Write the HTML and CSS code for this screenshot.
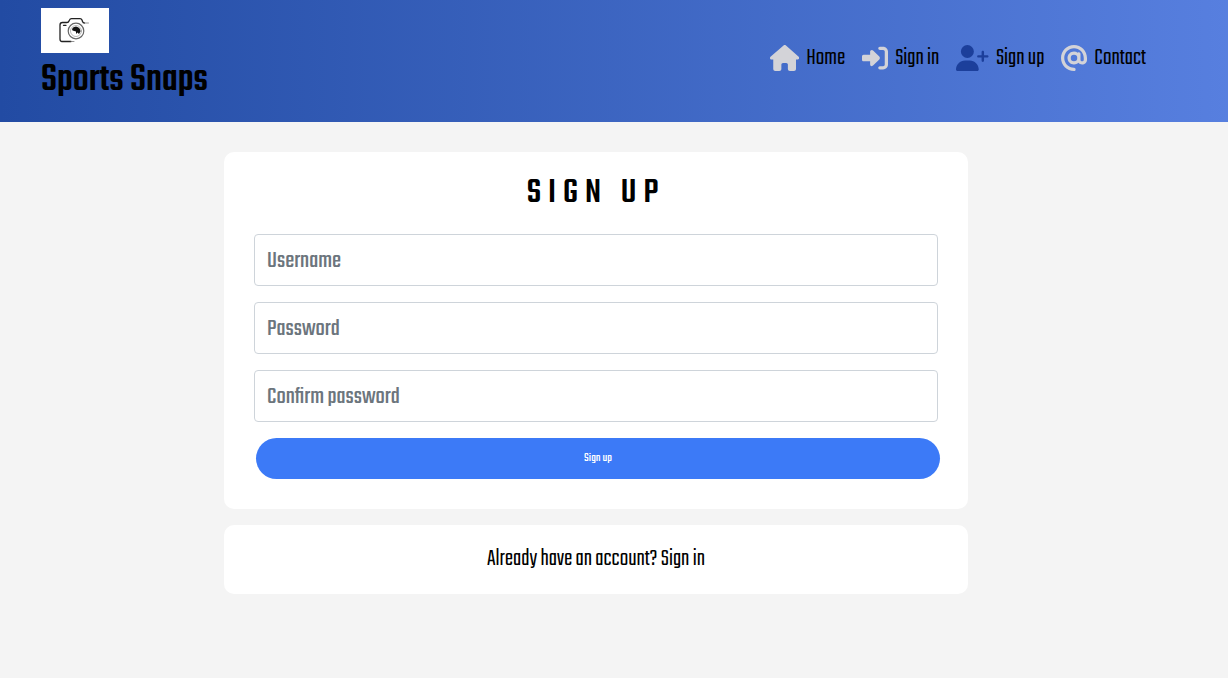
FILE: index.html
```html
<!DOCTYPE html>
<html lang="en">
<head>
<meta charset="utf-8">
<meta name="viewport" content="width=device-width, initial-scale=1">
<title>Sports Snaps</title>
<link rel="stylesheet" href="styles.css">
</head>
<body>
<header class="header">
  <a class="brand" href="#">
    <svg class="brand-logo" viewBox="0 0 68 45" role="img" aria-label="Camera">
      <rect width="68" height="45" fill="#fff"/>
      <g fill="none" stroke="#222" stroke-linecap="round" stroke-linejoin="round">
        <path stroke-width="1.3" d="M30 33.500H21Q19 33.500 19 31V17Q19 14.500 21.500 14.500H26Q27.500 14.500 28 13L28.500 12Q29 10.700 30.500 10.700H39Q40.500 10.700 41 12L41.500 13.500Q42 15 43.500 15"/>
        <path stroke-width=".8" stroke="#777" d="M30 33.500h3M43.500 15h4"/>
        <circle cx="35" cy="23" r="7.800" stroke="#666" stroke-width="1.2"/>
        <circle cx="35" cy="23" r="5.500" stroke="#999" stroke-width=".7"/>
        <path stroke-width="1.300" d="M22.500 17.300h2.500"/>
      </g>
      <path fill="#111" d="M31 21Q32 18.500 35 18.500Q39.500 19.500 39.500 23.500L38 26L36.500 24.500L35 26V23.500L31.500 22.500Z"/>
    </svg>
    <span class="brand-name">Sports Snaps</span>
  </a>
  <nav class="nav">
    <a class="nav-link" href="#">
      <svg class="icon" viewBox="0 0 576 512" aria-hidden="true"><path d="M575.8 255.5c0 18-15 32.100-32 32.100h-32l.7 160.200c0 2.700-.2 5.400-.5 8.100V472c0 22.100-17.900 40-40 40H456c-1.100 0-2.200 0-3.300-.1c-1.400 .1-2.800 .1-4.200 .1H392c-22.100 0-40-17.900-40-40V384c0-17.700-14.300-32-32-32H256c-17.700 0-32 14.300-32 32v88c0 22.100-17.900 40-40 40H128.100c-1.500 0-3-.1-4.500-.2c-1.200 .1-2.400 .2-3.600 .2H104c-22.100 0-40-17.900-40-40V360c0-.9 0-1.900 .1-2.800V287.600H32c-18 0-32-14-32-32.100c0-9 3-17 10-24L266.400 8c7-7 15-8 22-8s15 2 21 7L564.800 231.500c8 7 12 15 11 24z"/></svg>
      <span>Home</span>
    </a>
    <a class="nav-link" href="#">
      <svg class="icon" viewBox="0 0 512 512" aria-hidden="true"><path d="M217.900 105.900L340.700 228.700c7.200 7.200 11.300 17.100 11.300 27.300s-4.100 20.100-11.300 27.300L217.900 406.100c-6.400 6.400-15 9.900-24 9.900c-18.700 0-33.900-15.200-33.900-33.900V320H32c-17.700 0-32-14.300-32-32v-64c0-17.700 14.300-32 32-32h128v-62.100c0-18.700 15.200-33.900 33.900-33.900c9 0 17.600 3.600 24 9.900zM352 416h64c17.700 0 32-14.300 32-32V128c0-17.700-14.300-32-32-32h-64c-17.700 0-32-14.300-32-32s14.300-32 32-32h64c53 0 96 43 96 96v256c0 53-43 96-96 96h-64c-17.700 0-32-14.300-32-32s14.300-32 32-32z"/></svg>
      <span>Sign in</span>
    </a>
    <a class="nav-link nav-link-active" href="#" aria-current="page">
      <svg class="icon" viewBox="0 0 640 512" aria-hidden="true"><path d="M96 128a128 128 0 1 1 256 0A128 128 0 1 1 96 128zM0 482.300C0 383.800 79.800 304 178.300 304h91.400C368.200 304 448 383.800 448 482.300c0 16.400-13.300 29.700-29.700 29.700H29.700C13.300 512 0 498.700 0 482.300zM504 312V248H440c-13.300 0-24-10.700-24-24s10.700-24 24-24h64V136c0-13.300 10.700-24 24-24s24 10.700 24 24v64h64c13.300 0 24 10.700 24 24s-10.700 24-24 24H552v64c0 13.300-10.700 24-24 24s-24-10.700-24-24z"/></svg>
      <span>Sign up</span>
    </a>
    <a class="nav-link" href="#">
      <svg class="icon" viewBox="0 0 512 512" aria-hidden="true"><path d="M256 64C150 64 64 150 64 256s86 192 192 192c17.700 0 32 14.300 32 32s-14.300 32-32 32C114.600 512 0 397.400 0 256S114.600 0 256 0S512 114.600 512 256v32c0 53-43 96-96 96c-29.300 0-55.600-13.200-73.200-33.900C320 371.100 289.500 384 256 384c-70.700 0-128-57.300-128-128s57.300-128 128-128c27.900 0 53.700 8.900 74.700 24.100c5.700-5 13.100-8.100 21.300-8.100c17.700 0 32 14.300 32 32v112c0 17.700 14.300 32 32 32s32-14.300 32-32V256c0-106-86-192-192-192zm64 192a64 64 0 1 0 -128 0 64 64 0 1 0 128 0z"/></svg>
      <span>Contact</span>
    </a>
  </nav>
</header>
<main class="main">
  <section class="card">
    <h1 class="card-title">Sign up</h1>
    <form class="form">
      <input class="field" type="text" placeholder="Username" aria-label="Username">
      <input class="field" type="password" placeholder="Password" aria-label="Password">
      <input class="field" type="password" placeholder="Confirm password" aria-label="Confirm password">
      <button class="submit" type="submit">Sign up</button>
    </form>
  </section>
  <section class="card card-note">
    <a class="note-link" href="#">Already have an account? <span>Sign in</span></a>
  </section>
</main>
</body>
</html>
```
FILE: styles.css
```css
* {
  box-sizing: border-box;
}

body {
  margin: 0;
  background: #f4f4f4;
  color: #000;
  font-family: Teko, "Liberation Sans Narrow", "Liberation Sans", sans-serif;
}

a {
  color: inherit;
  text-decoration: none;
}

.header {
  display: flex;
  justify-content: space-between;
  align-items: flex-start;
  padding: 8px 82px 13px 41px;
  background: linear-gradient(90deg, #224ba3, #577fdf);
}

.brand {
  display: flex;
  flex-direction: column;
}

.brand-logo {
  width: 68px;
  height: 45px;
}

.brand-name {
  font-size: 40px;
  font-weight: 500;
  line-height: 56px;
}

.nav {
  display: flex;
  gap: 17px;
  padding-top: 36px;
}

.nav-link {
  display: flex;
  align-items: center;
  gap: 7px;
  font-size: 25px;
  font-weight: 300;
  line-height: 28px;
}

.icon {
  height: 26px;
  fill: #d3d3d8;
}

.nav-link-active .icon {
  fill: #1c3f9b;
}

.main {
  display: flex;
  flex-direction: column;
  align-items: center;
  gap: 16px;
  padding: 30px 36px 30px 0;
}

.card {
  width: 100%;
  max-width: 744px;
  padding: 20px 30px 30px;
  border-radius: 10px;
  background: #fff;
}

.card-title {
  margin: 0 0 18px;
  font-size: 36px;
  font-weight: 500;
  line-height: 44px;
  letter-spacing: 7px;
  text-align: center;
  text-transform: uppercase;
}

.form {
  display: flex;
  flex-direction: column;
  gap: 16px;
}

.field {
  width: 100%;
  height: 52px;
  padding: 8px 12px 6px;
  border: 1px solid #ced4da;
  border-radius: 4px;
  background: #fff;
  font-family: inherit;
  font-size: 25px;
}

.field::placeholder {
  color: #6c757d;
  opacity: 1;
}

.submit {
  height: 41px;
  margin: 0 -2px 0 2px;
  padding: 0 6px 2px;
  border: 0;
  border-radius: 21px;
  background: #3c7af7;
  color: #fff;
  font-family: inherit;
  font-size: 13px;
}

.card-note {
  padding: 19px 30px 20px;
  font-size: 25px;
  font-weight: 300;
  line-height: 30px;
  text-align: center;
}
```
